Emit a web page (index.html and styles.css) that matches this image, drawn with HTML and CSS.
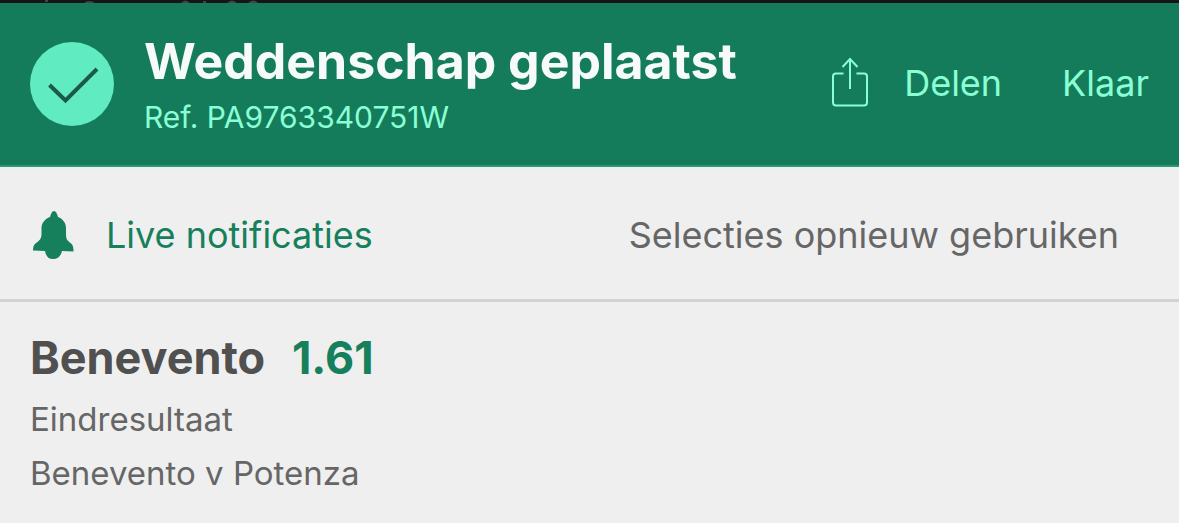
FILE: index.html
```html
<!DOCTYPE html>
<html lang="nl">
<head>
    <meta charset="UTF-8">
    <meta name="viewport" content="width=device-width, initial-scale=1.0">
    <title>Weddenschap geplaatst</title>
    <link rel="stylesheet" href="styles.css">
</head>
<body>
    <div class="top-strip">
        <svg width="270" height="3" viewBox="0 0 270 3" fill="#444" aria-hidden="true">
            <path d="M45 0h3v2h-3zM84 3q5-4 11 0zM181 3q4-5 9 0zM203 1h3v2h-3zM227 3q5-5 10 0zM248 3q5-5 10 0z"/>
        </svg>
    </div>

    <header class="receipt-header">
        <svg class="check-icon" viewBox="0 0 84 84" aria-hidden="true">
            <circle cx="42" cy="42" r="42" fill="#61ebc0"/>
            <path d="M19.500 43L35.500 58.500L67 27" fill="none" stroke="#1b5a46" stroke-width="4"/>
        </svg>
        <div class="receipt-title">
            <h1>Weddenschap geplaatst</h1>
            <p>Ref. PA9763340751W</p>
        </div>
        <div class="receipt-actions">
            <button type="button">
                <svg class="share-icon" viewBox="0 0 36 52" aria-hidden="true">
                    <path d="M11.500 16.500H4Q1 16.500 1 19.500V45.500Q1 48.500 4 48.500H32Q35 48.500 35 45.500V19.500Q35 16.500 32 16.500H24.500M18 32V2M10.500 10L18 2L25.500 10" fill="none" stroke="#8affd6" stroke-width="2"/>
                </svg>
                Delen
            </button>
            <button type="button">Klaar</button>
        </div>
    </header>

    <div class="options">
        <button type="button" class="notifications">
            <svg class="bell-icon" viewBox="0 0 42 50" aria-hidden="true">
                <path d="M18 7Q19.500 1 22 1Q24.500 1 26 7C31 9 34 13 34 18V24C34 30 36 31 38.500 33C41 35 41.500 37 41.500 41.500L30 41C29 46 26 49 21 49C16 49 14 46 13 41L1 40.500C1 37 1.500 35 4 33C7 31 9.500 29 9.500 24V18C9.500 13 13 9 18 7Z" fill="#16805c"/>
            </svg>
            Live notificaties
        </button>
        <button type="button" class="reuse">Selecties opnieuw gebruiken</button>
    </div>

    <main class="bet">
        <h2>Benevento <span class="odds">1.61</span></h2>
        <p>Eindresultaat</p>
        <p>Benevento v Potenza</p>
    </main>
</body>
</html>
```
FILE: styles.css
```css
body {
    font-family: Inter, sans-serif;
    background-color: #efefef;
    color: #666;
    margin: 0;
}

h1, h2, p {
    margin: 0;
}

svg {
    display: block;
    flex: none;
}

button {
    display: flex;
    align-items: center;
    padding: 0;
    border: 0;
    background: none;
    color: inherit;
    font-family: inherit;
    font-size: 36px;
    line-height: 44px;
    white-space: nowrap;
    cursor: pointer;
}

.top-strip {
    height: 3px;
    background-color: #151515;
    overflow: hidden;
}

.receipt-header {
    display: flex;
    align-items: center;
    min-height: 162px;
    padding: 0 30px;
    background-color: #157c5b;
    border-bottom: 2px solid #2a9a73;
    color: #8affd6;
}

.check-icon {
    width: 84px;
    height: 84px;
}

.receipt-title {
    flex: 1;
    margin-left: 30px;
    padding-top: 2px;
}

.receipt-title h1 {
    color: #f6fbfa;
    font-size: 50px;
    line-height: 64px;
    white-space: nowrap;
}

.receipt-title p {
    font-size: 30px;
    line-height: 48px;
}

.receipt-actions {
    display: flex;
    gap: 60px;
    padding-bottom: 2px;
}

.receipt-actions button {
    gap: 36px;
}

.share-icon {
    width: 36px;
    height: 52px;
}

.options {
    display: flex;
    align-items: center;
    justify-content: space-between;
    min-height: 128px;
    padding: 4px 60px 0 32px;
    border-bottom: 3px solid #d3d3d3;
}

.notifications {
    gap: 32px;
    color: #16805c;
}

.bell-icon {
    width: 42px;
    height: 50px;
}

.bet {
    padding: 26px 30px;
}

.bet h2 {
    margin-bottom: 4px;
    color: #505050;
    font-size: 45px;
    line-height: 60px;
}

.bet .odds {
    margin-left: 16px;
    color: #16805c;
}

.bet p {
    font-size: 33px;
    line-height: 54px;
}
```
